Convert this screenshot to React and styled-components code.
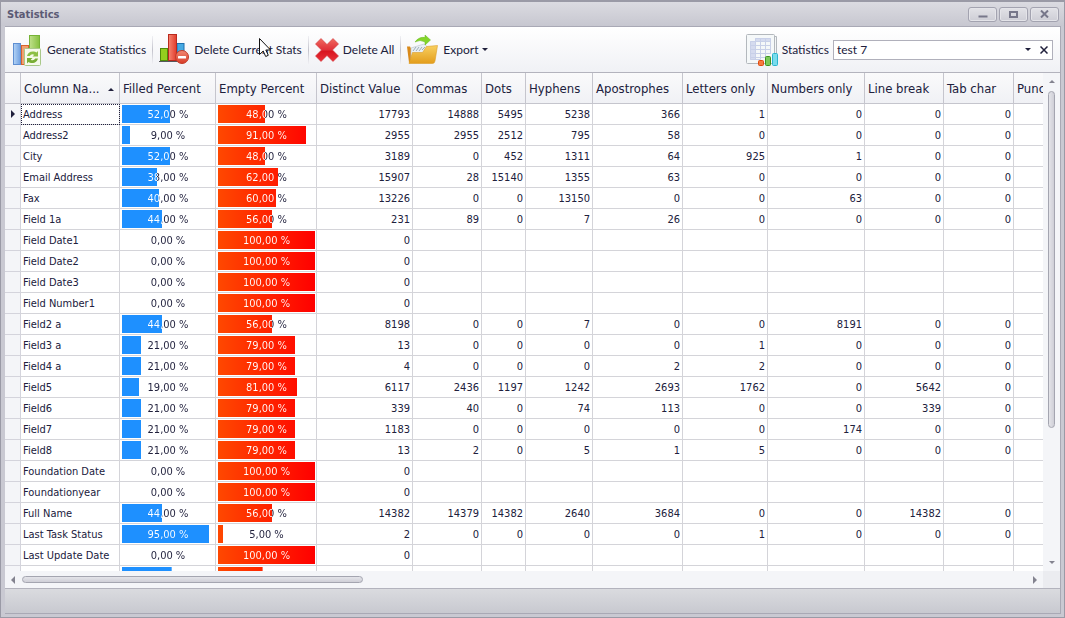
import { useState } from 'react';
import styled, { createGlobalStyle, css } from 'styled-components';

const GlobalStyle = createGlobalStyle`
  * {
    box-sizing: border-box;
  }
  body {
    margin: 0;
    font-family: Tahoma, 'DejaVu Sans Condensed', 'Noto Sans', sans-serif;
    font-size: 11px;
    color: #20203c;
  }
  button, select {
    font-family: inherit;
    color: inherit;
  }
`;

const Window = styled.div`
  position: relative;
  display: flex;
  flex-direction: column;
  height: 100vh;
  padding: 0 3px 3px 4px;
  overflow: hidden;
  border: 1px solid #9a9aa6;
  border-top-width: 2px;
  background-color: #c9c9d2;
`;

const TitleBar = styled.header`
  display: flex;
  align-items: center;
  justify-content: space-between;
  flex: none;
  height: 24px;
  margin: 0 -3px 0 -4px;
  padding: 0 5px 0 6px;
  background: linear-gradient(#dbdbe1, #c7c7d0);
`;

const Title = styled.h1`
  margin: 0;
  font-size: 11px;
  font-weight: bold;
  color: #5b5a74;
`;

const WindowButtons = styled.div`
  display: flex;
  gap: 2px;
`;

const WindowButton = styled.button`
  display: flex;
  align-items: center;
  justify-content: center;
  width: 29px;
  height: 15px;
  padding: 0;
  border: 1px solid #a3a3b0;
  border-radius: 3px;
  background: linear-gradient(#e2e2e7, #cdcdd5);
  box-shadow: inset 0 0 0 1px #e4e4e9;
`;

const Client = styled.main`
  display: flex;
  flex-direction: column;
  flex: 1;
  min-height: 0;
  border: 1px solid #a9a9b5;
  border-width: 1px 1px 1px 0;
  background-color: #fff;
`;

const Toolbar = styled.div`
  display: flex;
  align-items: center;
  flex: none;
  height: 46px;
  padding: 0 7px 0 1px;
  border-bottom: 1px solid #b3b3bd;
  background: linear-gradient(#ffffff, #f0f1f5);
  font-family: Lato, sans-serif;
  font-size: 12px;
`;

const ToolButton = styled.button`
  display: flex;
  align-items: center;
  gap: 4px;
  padding: 0 6px;
  border: 0;
  background: none;
  font-size: inherit;
  white-space: nowrap;
`;

const Separator = styled.span`
  width: 1px;
  height: 28px;
  background: linear-gradient(#f0f0f4, #c3c3cc, #f0f0f4);
`;

const Picker = styled.div`
  display: flex;
  align-items: center;
  gap: 4px;
  margin-left: auto;
`;

const Combo = styled.div`
  display: flex;
  align-items: center;
  width: 220px;
  height: 20px;
  border: 1px solid #b0b0bb;
  background-color: #fff;
  select {
    flex: 1;
    height: 18px;
    padding: 0 3px;
    border: 0;
    outline: 0;
    appearance: none;
    background: none;
    font-size: inherit;
  }
`;

const ComboButton = styled.button`
  display: flex;
  align-items: center;
  justify-content: center;
  width: 16px;
  height: 18px;
  padding: 0;
  border: 0;
  background: none;
`;

const Arrow = styled.span`
  display: block;
  width: 0;
  height: 0;
  border: ${(props) => props.$size || 3}px solid transparent;
  ${(props) => css`
    border-${props.$from}-color: ${props.$color || '#20203c'};
    border-${props.$from}-width: ${props.$size || 3}px;
    border-${props.$to}-width: 0;
  `}
`;

const GridArea = styled.section`
  display: grid;
  grid-template-columns: 1fr 17px;
  grid-template-rows: 1fr 17px;
  flex: 1;
  min-height: 0;
  background-color: #f4f5f8;
`;

const TableView = styled.div`
  min-width: 0;
  min-height: 0;
  overflow: hidden;
  background-color: #fff;
`;

const Table = styled.table`
  width: 1109px;
  table-layout: fixed;
  border-collapse: separate;
  border-spacing: 0;
  line-height: 14px;
`;

const Th = styled.th`
  height: 31px;
  padding: 2px 3px 0;
  overflow: hidden;
  border-right: 1px solid #c5c5cd;
  border-bottom: 1px solid #c5c5cd;
  background: linear-gradient(#fafafb, #f0f1f5);
  font-size: 13px;
  font-weight: normal;
  text-align: left;
  white-space: nowrap;
`;

const SortLabel = styled.span`
  display: flex;
  align-items: center;
  justify-content: space-between;
  padding-right: 2px;
`;

const Td = styled.td`
  height: 21px;
  padding: 2px 2px 0;
  overflow: hidden;
  border-right: 1px solid #d4d4d9;
  border-bottom: 1px solid #d4d4d9;
  text-align: ${(props) => (props.$name ? 'left' : 'right')};
  white-space: nowrap;
  ${(props) =>
    props.$focused &&
    css`
      outline: 1px dotted #20203c;
      outline-offset: -1px;
    `}
`;

const MarkerTd = styled(Td)`
  padding: 0 6px;
  border-color: #d4d4dc;
  background-color: #f4f5f8;
`;

const BarTd = styled(Td)`
  padding: 0 1px 0 2px;
`;

const Bar = styled.div`
  height: 18px;
  line-height: 20px;
  background: ${(props) =>
    props.$red ? 'linear-gradient(to right, #ff4800, #ff0000)' : '#1e90ff'};
`;

// white over the filled part of the bar, dark over the rest of it
const BarText = styled.span`
  display: block;
  height: 18px;
  background-clip: text, border-box;
  color: transparent;
  text-align: center;
`;

const VScroll = styled.div`
  display: flex;
  flex-direction: column;
  align-items: center;
  justify-content: space-between;
  padding: 7px 0;
`;

const HScroll = styled.div`
  display: flex;
  align-items: center;
  justify-content: space-between;
  padding: 0 6px;
`;

const Track = styled.div`
  flex: 1;
  ${(props) => (props.$vertical ? 'margin: 8px 0;' : 'margin: 0 7px;')}
`;

const Thumb = styled.div`
  border: 1px solid #a4a5b0;
  border-radius: 4px;
  ${(props) =>
    props.$vertical
      ? css`
          width: 7px;
          height: 73%;
          background: linear-gradient(to right, #e4e4e9, #cfcfd7);
        `
      : css`
          width: 34%;
          height: 7px;
          background: linear-gradient(#e4e4e9, #cfcfd7);
        `}
`;

const Corner = styled.div`
  background-color: #ebecf0;
`;

const StatusBar = styled.footer`
  flex: none;
  height: 25px;
  border-top: 1px solid #b3b3bd;
  background: linear-gradient(#dadbdf, #c8c9d0);
`;

const Pointer = styled.svg`
  position: absolute;
  left: 257px;
  top: 35px;
  pointer-events: none;
`;

const GenerateIcon = () => (
  <svg width="31" height="32" viewBox="0 0 31 32">
    <defs>
      <linearGradient id="genBlue">
        <stop offset="0" stopColor="#b4d4f6" />
        <stop offset="1" stopColor="#6f9fe0" />
      </linearGradient>
      <linearGradient id="genGreen">
        <stop offset="0" stopColor="#bfe08a" />
        <stop offset="1" stopColor="#86c040" />
      </linearGradient>
    </defs>
    <rect x="1.5" y="9.5" width="7" height="21" fill="url(#genBlue)" stroke="#5f8fd2" />
    <rect x="9.5" y="11.5" width="7" height="19" fill="#f0a070" stroke="#d8632c" />
    <rect x="17.5" y="1.5" width="10" height="20" fill="url(#genGreen)" stroke="#76b336" />
    <rect x="12.5" y="14.5" width="16" height="17" rx="1" fill="#f6faeb" stroke="#a9c889" />
    <path d="M15 22a6 5.5 0 0 1 9.5-3.5l1.5-1.5v5.5h-5.5l1.8-1.8a3.5 3.5 0 0 0-4.6 1.3z" fill="#8dbf45" />
    <path d="M26 24.5a6 5.5 0 0 1-9.5 3.5l-1.5 1.5v-5.5h5.5l-1.8 1.8a3.5 3.5 0 0 0 4.6-1.3z" fill="#79ae35" />
  </svg>
);

const DeleteStatsIcon = () => (
  <svg width="31" height="32" viewBox="0 0 31 32">
    <defs>
      <linearGradient id="delRed">
        <stop offset="0" stopColor="#f58672" />
        <stop offset="1" stopColor="#e23c2c" />
      </linearGradient>
      <linearGradient id="delMinus" x2="0" y2="1">
        <stop offset="0" stopColor="#f18a74" />
        <stop offset="1" stopColor="#d83a26" />
      </linearGradient>
    </defs>
    <path d="M0 27.5h22" stroke="#55585c" />
    <rect x="1.5" y="14.5" width="7" height="12" fill="#94cf1e" stroke="#4d8a0b" />
    <rect x="18" y="9.5" width="7" height="17" fill="#45a9e2" stroke="#1d6fae" />
    <rect x="9.5" y="0.5" width="8" height="26" fill="url(#delRed)" stroke="#ba2a1e" />
    <circle cx="23" cy="23" r="6.5" fill="url(#delMinus)" stroke="#c23a28" />
    <rect x="19" y="22" width="8" height="2.5" rx="0.5" fill="#fff" />
  </svg>
);

const CrossIcon = () => (
  <svg width="24" height="24" viewBox="0 0 24 24">
    <defs>
      <linearGradient id="crossRed" x2="0" y2="1">
        <stop offset="0" stopColor="#f06a60" />
        <stop offset="0.5" stopColor="#e03038" />
        <stop offset="0.55" stopColor="#d8151f" />
        <stop offset="1" stopColor="#e8323a" />
      </linearGradient>
    </defs>
    <path
      d="M6 .5 12 6.5 18 .5 23.5 6 17.5 12l6 6L18 23.5l-6-6-6 6L.5 18l6-6-6-6z"
      fill="url(#crossRed)"
      stroke="#d23a3c"
      strokeWidth="0.6"
    />
  </svg>
);

const ExportIcon = () => (
  <svg width="32" height="32" viewBox="0 0 32 32">
    <defs>
      <linearGradient id="folder" x2="0" y2="1">
        <stop offset="0" stopColor="#f8d060" />
        <stop offset="1" stopColor="#e39d1c" />
      </linearGradient>
    </defs>
    <path d="M0 12.500h3l1 2 3-1v15H2z" fill="#d9891a" />
    <path d="M4 14l13-4 5 4-1 8-17 3z" fill="#e9eff4" stroke="#b8c4cc" strokeWidth="0.6" />
    <path d="M6 17l3-4m0 4l3-4m0 4l3-4m0 3l3-3" stroke="#8b9ca8" strokeWidth="0.8" />
    <path
      d="M2 29.500 5.500 18.500h10l4-6 11-1-2.500 15.500q-.5 2.500-2.500 2.500z"
      fill="url(#folder)"
      stroke="#dc9d28"
      strokeWidth="0.6"
    />
    <path
      d="M8 8q4-5.500 10-4.500V1L23.500 6 18 11V8Q13 5 8 8z"
      fill="#84d62a"
      stroke="#64b41c"
      strokeWidth="0.5"
    />
  </svg>
);

const SheetIcon = () => (
  <svg width="32" height="32" viewBox="0 0 32 32">
    <path d="M28.5 2.5h2v27h-5" fill="#f4f6f8" stroke="#b3b8bd" />
    <rect x="0.5" y="0.5" width="28" height="29" rx="1" fill="#f5f8f9" stroke="#b3b8bd" />
    <path d="M4 7h5v19H4zM9 4h16v3H9z" fill="#d5dbef" />
    <path
      d="M4.5 7.5h20.5M4.5 11.5h20.5M4.5 15.5h20.5M4.5 19.5h20.5M4.5 23.5h16M9.5 4.5v21M14.5 4.5v21M19.5 4.5v19M24.5 4.5v15M9.5 4.5h15M4.5 7.5v18h10"
      fill="none"
      stroke="#c8d0e8"
    />
    <rect x="12.5" y="26.5" width="5" height="5" rx="1" fill="#f67a3e" stroke="#e04a10" />
    <rect x="19.5" y="22.5" width="5" height="9" rx="1" fill="#7cc958" stroke="#3d9422" />
    <rect x="26.5" y="19.5" width="5" height="12" rx="1" fill="#79dcec" stroke="#2bb4cf" />
  </svg>
);

const columns = [
  ['Filled Percent', 96],
  ['Empty Percent', 101],
  ['Distinct Value', 96],
  ['Commas', 69],
  ['Dots', 44],
  ['Hyphens', 67],
  ['Apostrophes', 90],
  ['Letters only', 85],
  ['Numbers only', 97],
  ['Line break', 79],
  ['Tab char', 70],
  ['Punctuation', 100],
];

// name, filled percent, then the counters in column order
const rows = [
  ['Address', 52, 17793, 14888, 5495, 5238, 366, 1, 0, 0, 0],
  ['Address2', 9, 2955, 2955, 2512, 795, 58, 0, 0, 0, 0],
  ['City', 52, 3189, 0, 452, 1311, 64, 925, 1, 0, 0],
  ['Email Address', 38, 15907, 28, 15140, 1355, 63, 0, 0, 0, 0],
  ['Fax', 40, 13226, 0, 0, 13150, 0, 0, 63, 0, 0],
  ['Field 1a', 44, 231, 89, 0, 7, 26, 0, 0, 0, 0],
  ['Field Date1', 0, 0],
  ['Field Date2', 0, 0],
  ['Field Date3', 0, 0],
  ['Field Number1', 0, 0],
  ['Field2 a', 44, 8198, 0, 0, 7, 0, 0, 8191, 0, 0],
  ['Field3 a', 21, 13, 0, 0, 0, 0, 1, 0, 0, 0],
  ['Field4 a', 21, 4, 0, 0, 0, 2, 2, 0, 0, 0],
  ['Field5', 19, 6117, 2436, 1197, 1242, 2693, 1762, 0, 5642, 0],
  ['Field6', 21, 339, 40, 0, 74, 113, 0, 0, 339, 0],
  ['Field7', 21, 1183, 0, 0, 0, 0, 0, 174, 0, 0],
  ['Field8', 21, 13, 2, 0, 5, 1, 5, 0, 0, 0],
  ['Foundation Date', 0, 0],
  ['Foundationyear', 0, 0],
  ['Full Name', 44, 14382, 14379, 14382, 2640, 3684, 0, 0, 14382, 0],
  ['Last Task Status', 95, 2, 0, 0, 0, 0, 1, 0, 0, 0],
  ['Last Update Date', 0, 0],
  ['', 54],
];

const counters = [2, 3, 4, 5, 6, 7, 8, 9, 10, 11];

function PercentCell({ value, red, blank }) {
  return (
    <BarTd>
      <Bar $red={red} style={{ clipPath: blank ? `inset(0 ${100 - value}% 0 0)` : undefined }}>
        {!blank && (
          <BarText
            style={{
              backgroundImage: `linear-gradient(to right, #fff ${value}%, #20203c ${value}%), linear-gradient(to right, transparent ${value}%, #fff ${value}%)`,
            }}
          >
            {value},00 %
          </BarText>
        )}
      </Bar>
    </BarTd>
  );
}

export default function App() {
  const [stat, setStat] = useState('test 7');
  return (
    <>
      <GlobalStyle />
      <Window>
        <TitleBar>
          <Title>Statistics</Title>
          <WindowButtons>
            <WindowButton aria-label="Minimize">
              <svg width="10" height="8" viewBox="0 0 10 8">
                <path d="M0.5 6.5h9" stroke="#77778a" strokeWidth="2" />
              </svg>
            </WindowButton>
            <WindowButton aria-label="Maximize">
              <svg width="9" height="7" viewBox="0 0 9 7">
                <rect x="1" y="1" width="7" height="5" fill="none" stroke="#77778a" strokeWidth="2" />
              </svg>
            </WindowButton>
            <WindowButton aria-label="Close">
              <svg width="9" height="8" viewBox="0 0 9 8">
                <path d="M1 .5l7 7M8 .5l-7 7" stroke="#77778a" strokeWidth="2" />
              </svg>
            </WindowButton>
          </WindowButtons>
        </TitleBar>
        <Client>
          <Toolbar>
            <ToolButton>
              <GenerateIcon />
              Generate Statistics
            </ToolButton>
            <Separator />
            <ToolButton>
              <DeleteStatsIcon />
              Delete Current Stats
            </ToolButton>
            <Separator />
            <ToolButton>
              <CrossIcon />
              Delete All
            </ToolButton>
            <Separator />
            <ToolButton>
              <ExportIcon />
              Export
              <Arrow $from="top" $to="bottom" />
            </ToolButton>
            <Picker>
              <SheetIcon />
              <label htmlFor="stat">Statistics</label>
              <Combo>
                <select id="stat" value={stat} onChange={(e) => setStat(e.target.value)}>
                  <option>test 7</option>
                </select>
                <ComboButton aria-label="Open list">
                  <Arrow $from="top" $to="bottom" />
                </ComboButton>
                <ComboButton aria-label="Clear">
                  <svg width="8" height="8" viewBox="0 0 8 8">
                    <path d="M.5 .5l7 7M7.5 .5l-7 7" stroke="#20203c" strokeWidth="1.5" />
                  </svg>
                </ComboButton>
              </Combo>
            </Picker>
          </Toolbar>
          <GridArea>
            <TableView>
              <Table>
                <colgroup>
                  <col style={{ width: 16 }} />
                  <col style={{ width: 99 }} />
                  {columns.map(([name, width]) => (
                    <col key={name} style={{ width }} />
                  ))}
                </colgroup>
                <thead>
                  <tr>
                    <Th />
                    <Th>
                      <SortLabel>
                        Column Na...
                        <Arrow $from="bottom" $to="top" />
                      </SortLabel>
                    </Th>
                    {columns.map(([name]) => (
                      <Th key={name}>{name}</Th>
                    ))}
                  </tr>
                </thead>
                <tbody>
                  {rows.map((row, i) => (
                    <tr key={i}>
                      <MarkerTd>{i === 0 && <Arrow $from="left" $to="right" $size={4} />}</MarkerTd>
                      <Td $name $focused={i === 0}>
                        {row[0]}
                      </Td>
                      <PercentCell value={row[1]} blank={!row[0]} />
                      <PercentCell value={100 - row[1]} red blank={!row[0]} />
                      {counters.map((c) => (
                        <Td key={c}>{row[c]}</Td>
                      ))}
                    </tr>
                  ))}
                </tbody>
              </Table>
            </TableView>
            <VScroll>
              <Arrow $from="bottom" $to="top" $color="#83838f" />
              <Track $vertical>
                <Thumb $vertical />
              </Track>
              <Arrow $from="top" $to="bottom" $color="#83838f" />
            </VScroll>
            <HScroll>
              <Arrow $from="right" $to="left" $size={4} $color="#83838f" />
              <Track>
                <Thumb />
              </Track>
              <Arrow $from="left" $to="right" $size={4} $color="#83838f" />
            </HScroll>
            <Corner />
          </GridArea>
          <StatusBar />
        </Client>
        <Pointer width="13" height="21" viewBox="0 0 13 21">
          <path
            d="M1.5 1.5v16l3.7-3.5 2.5 5.5 2.6-1.2-2.5-5.3h4.7z"
            fill="#fff"
            stroke="#111"
          />
        </Pointer>
      </Window>
    </>
  );
}
